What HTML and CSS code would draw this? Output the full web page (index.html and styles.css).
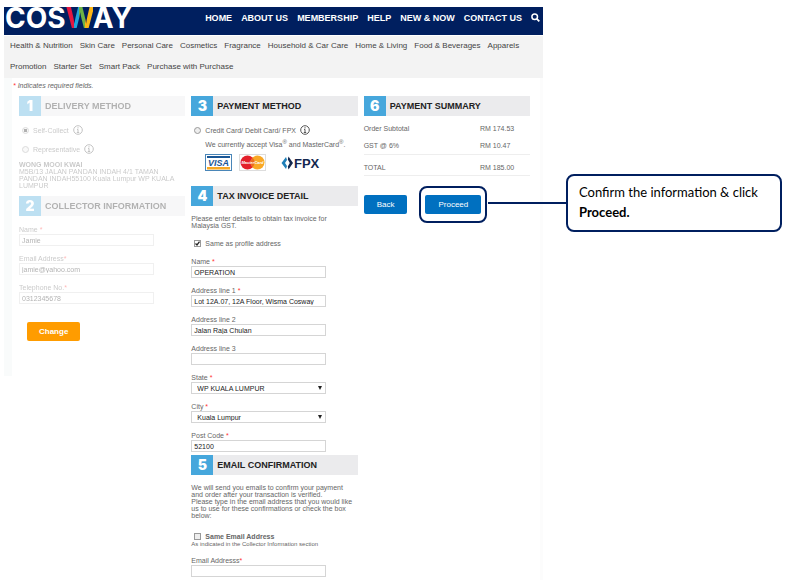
FILE: index.html
```
<!DOCTYPE html>
<html lang="en">
<head>
    <meta charset="UTF-8">
    <title>Cosway - Checkout</title>
    <link rel="stylesheet" href="styles.css">
</head>
<body>
    <div class="site">
        <header class="header">
            <a class="logo" href="#">COS<span class="logo-w">W</span>AY</a>
            <nav class="main-nav">
                <a href="#">HOME</a>
                <a href="#">ABOUT US</a>
                <a href="#">MEMBERSHIP</a>
                <a href="#">HELP</a>
                <a href="#">NEW &amp; NOW</a>
                <a href="#">CONTACT US</a>
                <a href="#" class="search" aria-label="Search">
                    <svg width="9" height="9" viewBox="0 0 9 9"><circle cx="3.7" cy="3.7" r="2.8" fill="none" stroke="#fff" stroke-width="1.5"/><path d="M5.8 5.8L8.3 8.3" stroke="#fff" stroke-width="1.8"/></svg>
                </a>
            </nav>
        </header>
        <nav class="categories">
            <a href="#">Health &amp; Nutrition</a>
            <a href="#">Skin Care</a>
            <a href="#">Personal Care</a>
            <a href="#">Cosmetics</a>
            <a href="#">Fragrance</a>
            <a href="#">Household &amp; Car Care</a>
            <a href="#">Home &amp; Living</a>
            <a href="#">Food &amp; Beverages</a>
            <a href="#">Apparels</a>
            <a href="#">Promotion</a>
            <a href="#">Starter Set</a>
            <a href="#">Smart Pack</a>
            <a href="#">Purchase with Purchase</a>
        </nav>

        <main class="checkout">
            <p class="required-note"><span class="req">*</span> Indicates required fields.</p>
            <div class="columns">
                <div class="column">
                    <div class="faded">
                        <h2 class="section-title"><span class="step">1</span>DELIVERY METHOD</h2>
                        <div class="option">
                            <input type="radio" name="delivery" id="self" checked>
                            <label for="self">Self-Collect</label>
                            <svg class="info" width="10" height="10" viewBox="0 0 10 10"><circle cx="5" cy="5" r="4.3"/><path d="M5 2.2V3.4M4 4.4H5V7.4M3.8 7.5H6.2"/></svg>
                        </div>
                        <div class="option">
                            <input type="radio" name="delivery" id="rep">
                            <label for="rep">Representative</label>
                            <svg class="info" width="10" height="10" viewBox="0 0 10 10"><circle cx="5" cy="5" r="4.3"/><path d="M5 2.2V3.4M4 4.4H5V7.4M3.8 7.5H6.2"/></svg>
                        </div>
                        <p class="address"><b>WONG MOOI KWAI</b><br>M5B/13 JALAN PANDAN INDAH 4/1 TAMAN<br>PANDAN INDAH55100 Kuala Lumpur WP KUALA<br>LUMPUR</p>

                        <h2 class="section-title"><span class="step">2</span>COLLECTOR INFORMATION</h2>
                        <div class="fields">
                            <div class="field">
                                <label for="cname">Name <span class="req">*</span></label>
                                <input type="text" id="cname" value="Jamie">
                            </div>
                            <div class="field">
                                <label for="cemail">Email Address<span class="req">*</span></label>
                                <input type="text" id="cemail" value="jamie@yahoo.com">
                            </div>
                            <div class="field">
                                <label for="cphone">Telephone No.<span class="req">*</span></label>
                                <input type="text" id="cphone" value="0312345678">
                            </div>
                        </div>
                    </div>
                    <button class="btn change">Change</button>
                </div>

                <div class="column">
                    <h2 class="section-title"><span class="step">3</span>PAYMENT METHOD</h2>
                    <div class="option">
                        <input type="radio" name="payment" id="card">
                        <label for="card">Credit Card/ Debit Card/ FPX</label>
                        <svg class="info" width="10" height="10" viewBox="0 0 10 10"><circle cx="5" cy="5" r="4.3"/><path d="M5 2.2V3.4M4 4.4H5V7.4M3.8 7.5H6.2"/></svg>
                    </div>
                    <p class="accept">We currently accept Visa<sup>®</sup> and MasterCard<sup>®</sup>.</p>
                    <div class="cards">
                        <svg width="27" height="17" viewBox="0 0 27 17">
                            <rect x="0.5" y="0.5" width="26" height="16" fill="#fff" stroke="#4a86b8"/>
                            <rect x="2" y="2" width="23" height="2" fill="#1a5796"/>
                            <rect x="2" y="13" width="23" height="2.5" fill="#f7a823"/>
                            <text x="13.5" y="12" text-anchor="middle" class="visa-text">VISA</text>
                        </svg>
                        <svg width="27" height="17" viewBox="0 0 27 17">
                            <rect x="0.5" y="0.5" width="26" height="16" fill="#fff" stroke="#ddd"/>
                            <circle cx="8.5" cy="8.5" r="7" fill="#e3202b"/>
                            <circle cx="18.5" cy="8.5" r="7" fill="#f9a825"/>
                            <path d="M13.5 3.6A7 7 0 0 1 13.5 13.4A7 7 0 0 1 13.5 3.6Z" fill="#ee6a22"/>
                            <text x="13.5" y="10" text-anchor="middle" class="mc-text">MasterCard</text>
                        </svg>
                        <svg class="fpx" width="40" height="17" viewBox="0 0 40 17">
                            <path d="M5 3L0.5 9L5 15L6 12L4 9L6 6Z" fill="#1f7fb8"/>
                            <path d="M7.5 2.5L12 9L7.5 15.5L6.8 12.5L8.8 9L6.8 5.5Z" fill="#14284f"/>
                            <text x="13" y="14" class="fpx-text">FPX</text>
                        </svg>
                    </div>

                    <h2 class="section-title"><span class="step">4</span>TAX INVOICE DETAIL</h2>
                    <p class="intro">Please enter details to obtain tax invoice for<br>Malaysia GST.</p>
                    <div class="option">
                        <input type="checkbox" id="same" checked>
                        <label for="same">Same as profile address</label>
                    </div>
                    <div class="fields">
                        <div class="field">
                            <label for="name">Name <span class="req">*</span></label>
                            <input type="text" id="name" value="OPERATION">
                        </div>
                        <div class="field">
                            <label for="addr1">Address line 1 <span class="req">*</span></label>
                            <input type="text" id="addr1" value="Lot 12A.07, 12A Floor, Wisma Cosway">
                        </div>
                        <div class="field">
                            <label for="addr2">Address line 2</label>
                            <input type="text" id="addr2" value="Jalan Raja Chulan">
                        </div>
                        <div class="field">
                            <label for="addr3">Address line 3</label>
                            <input type="text" id="addr3">
                        </div>
                        <div class="field">
                            <label for="state">State <span class="req">*</span></label>
                            <select id="state"><option>WP KUALA LUMPUR</option></select>
                        </div>
                        <div class="field">
                            <label for="city">City <span class="req">*</span></label>
                            <select id="city"><option>Kuala Lumpur</option></select>
                        </div>
                        <div class="field">
                            <label for="post">Post Code <span class="req">*</span></label>
                            <input type="text" id="post" value="52100">
                        </div>
                    </div>

                    <h2 class="section-title"><span class="step">5</span>EMAIL CONFIRMATION</h2>
                    <p class="intro">We will send you emails to confirm your payment<br>and order after your transaction is verified.<br>Please type in the email address that you would like<br>us to use for these confirmations or check the box<br>below:</p>
                    <div class="option same-email">
                        <input type="checkbox" id="same-email">
                        <label for="same-email"><b>Same Email Address</b></label>
                    </div>
                    <p class="hint">As indicated in the Collector Information section</p>
                    <div class="field">
                        <label for="email">Email Addresss<span class="req">*</span></label>
                        <input type="text" id="email">
                    </div>
                </div>

                <div class="column">
                    <h2 class="section-title"><span class="step">6</span>PAYMENT SUMMARY</h2>
                    <table class="summary">
                        <tr><td>Order Subtotal</td><td>RM 174.53</td></tr>
                        <tr class="tax"><td>GST @ 6%</td><td>RM 10.47</td></tr>
                        <tr class="total"><td>TOTAL</td><td>RM 185.00</td></tr>
                    </table>
                    <div class="actions">
                        <button class="btn back">Back</button>
                        <div class="highlight"><button class="btn">Proceed</button></div>
                    </div>
                </div>
            </div>
        </main>
    </div>

    <aside class="notes">
        <div class="callout">Confirm the information &amp; click <b>Proceed.</b></div>
    </aside>
</body>
</html>
```
FILE: styles.css
```
* {
    box-sizing: border-box;
}

body {
    display: flex;
    margin: 0;
    padding: 7px 8px 0 4px;
    background-color: #fff;
    font-family: "Liberation Sans", Arial, sans-serif;
    font-size: 7px;
    line-height: 7px;
    color: #666;
}

p, h2 {
    margin: 0;
}

a {
    color: inherit;
    text-decoration: none;
}

.site {
    flex: 1;
}

/* header */
.header {
    display: flex;
    justify-content: space-between;
    height: 28px;
    padding: 0 3px 0 1px;
    background-color: #001f5f;
    color: #fff;
}

.logo {
    font-family: Inter, sans-serif;
    font-size: 28px;
    font-weight: 700;
    line-height: 23px;
}

.logo-w {
    background: linear-gradient(90deg, #e5173f 28%, #1fa5dc 28%, #1fa5dc 48%, #6fb444 48%, #6fb444 70%, #fbb615 70%);
    -webkit-background-clip: text;
    background-clip: text;
    color: transparent;
}

.main-nav {
    display: flex;
    gap: 9px;
    padding-top: 6px;
    font-size: 9px;
    font-weight: bold;
    line-height: 10px;
}

.categories {
    display: flex;
    flex-wrap: wrap;
    gap: 11px 7px;
    margin-top: 1px;
    padding: 5px 7px 6px 6px;
    background-color: #f3f3f3;
    color: #444;
    font-size: 8px;
    line-height: 10px;
}

/* checkout */
.checkout {
    padding: 4px 13px 0 15px;
    background: linear-gradient(#f9fbfb, #f9fbfb) no-repeat left top / 8px 298px,
                linear-gradient(#fcfcfc, #fcfcfc) no-repeat right top / 3px 100%;
}

.required-note {
    margin-left: -6px;
    font-style: italic;
    line-height: 8px;
}

.req {
    color: #f33;
}

.columns {
    display: flex;
    gap: 6px;
    margin-top: 6px;
}

.column {
    flex: 1;
    min-width: 0;
}

.faded {
    opacity: 0.35;
}

.section-title {
    display: flex;
    align-items: center;
    gap: 4px;
    height: 20px;
    background-color: #ebebed;
    color: #222;
    font-size: 9px;
    font-weight: bold;
}

.step {
    width: 22px;
    background-color: #46a7dc;
    color: #fff;
    font-family: Inter, sans-serif;
    font-size: 14px;
    font-weight: 900;
    line-height: 20px;
    text-align: center;
}

.option {
    display: flex;
    align-items: center;
    gap: 4px;
    height: 10px;
    margin-top: 9px;
    padding-left: 3px;
}

.option input {
    appearance: none;
    width: 7px;
    height: 7px;
    margin: 0;
    border: 1px solid #999;
    background-color: #eee;
}

.option input[type="radio"] {
    border-radius: 50%;
}

.option input[type="radio"]:checked {
    background: radial-gradient(#222 40%, #eee 50%);
}

.option input[type="checkbox"]:checked {
    background: url("data:image/svg+xml,%3Csvg xmlns='http://www.w3.org/2000/svg' viewBox='0 0 5 5'%3E%3Cpath d='M.5 2.5L2 4L4.5 .7' fill='none' stroke='%23222' stroke-width='1.3'/%3E%3C/svg%3E") no-repeat center / 5px 5px;
}

.info {
    fill: none;
    stroke: #555;
    stroke-width: 1;
}

.address {
    margin: 7px 0;
}

.fields {
    padding-top: 10px;
}

.field {
    display: flex;
    flex-direction: column;
    width: 135px;
    margin-bottom: 9px;
}

.field:last-child {
    margin-bottom: 3px;
}

.field label {
    line-height: 8px;
}

.field input,
.field select {
    height: 12px;
    padding: 0 2px;
    border: 1px solid #d5d5d5;
    border-radius: 0;
    background-color: #fff;
    color: #222;
    font-family: inherit;
    font-size: 7px;
}

.field select {
    appearance: none;
    padding-left: 5px;
    background: url("data:image/svg+xml,%3Csvg xmlns='http://www.w3.org/2000/svg' viewBox='0 0 4 4'%3E%3Cpath d='M0 0H4L2 4Z' fill='%23222'/%3E%3C/svg%3E") no-repeat right 3px center / 4px 4px;
}

.btn {
    height: 19px;
    padding: 0 13px;
    border: none;
    border-radius: 2px;
    background-color: #0070c0;
    color: #fff;
    font-family: inherit;
    font-size: 8px;
    cursor: pointer;
}

.change {
    margin: 15px 0 0 8px;
    padding: 0 12px;
    background-color: #ff9c00;
    font-weight: bold;
}

/* payment */
.accept {
    margin: 6px 0 6px 14px;
}

.accept sup {
    font-size: 6px;
    line-height: 0;
}

.cards {
    display: flex;
    gap: 7px;
    margin: 0 0 15px 14px;
}

.fpx {
    margin-left: 8px;
}

.visa-text {
    fill: #1a5796;
    font-size: 9px;
    font-weight: bold;
    font-style: italic;
}

.mc-text {
    fill: #fff;
    font-size: 4px;
    font-weight: bold;
    font-style: italic;
}

.fpx-text {
    fill: #14284f;
    font-size: 13px;
    font-weight: bold;
}

.intro {
    margin-top: 9px;
}

.same-email {
    margin-top: 12px;
}

.hint {
    margin-bottom: 9px;
    font-size: 6px;
}

/* summary */
.summary {
    width: 100%;
    margin-top: 4px;
    border-collapse: collapse;
}

.summary td {
    height: 17px;
    padding: 0;
}

.summary td:last-child {
    width: 50px;
}

.summary .tax td,
.summary .total td {
    border-bottom: 1px solid #eee;
}

.summary .total td {
    height: 21px;
    padding-top: 5px;
}

.actions {
    display: flex;
    align-items: center;
    gap: 12px;
    margin-top: 10px;
}

.highlight {
    padding: 7px 4px;
    border: 2px solid #001f5f;
    border-radius: 8px;
}

/* callout */
.notes {
    width: 239px;
    padding: 167px 0 0 23px;
}

.callout {
    position: relative;
    padding: 6px 11px 8px;
    border: 2px solid #001f5f;
    border-radius: 8px;
    background-color: #fff;
    color: #000;
    font-family: Lato, sans-serif;
    font-size: 13px;
    line-height: 20px;
}

/* line back to the Proceed button */
.callout::before {
    content: "";
    position: absolute;
    right: 100%;
    top: 26px;
    width: 80px;
    height: 2px;
    background-color: #001f5f;
}
```
